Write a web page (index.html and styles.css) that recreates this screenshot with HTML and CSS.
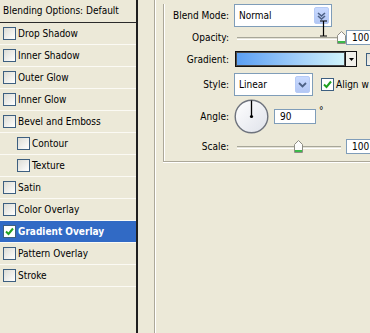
FILE: index.html
```html
<!DOCTYPE html>
<html lang="en">
<head>
    <meta charset="UTF-8">
    <title>Layer Style - Gradient Overlay</title>
    <link rel="stylesheet" href="styles.css">
</head>
<body>
    <div class="dialog">
        <div class="styles-list">
            <div class="list-head">Blending Options: Default</div>
            <div class="item"><span class="check"></span>Drop Shadow</div>
            <div class="item"><span class="check"></span>Inner Shadow</div>
            <div class="item"><span class="check"></span>Outer Glow</div>
            <div class="item"><span class="check"></span>Inner Glow</div>
            <div class="item"><span class="check"></span>Bevel and Emboss</div>
            <div class="item sub"><span class="check"></span>Contour</div>
            <div class="item sub"><span class="check"></span>Texture</div>
            <div class="item"><span class="check"></span>Satin</div>
            <div class="item"><span class="check"></span>Color Overlay</div>
            <div class="item selected">
                <span class="check on"><svg width="11" height="11" viewBox="0 0 11 11"><polyline points="2,5.5 4.5,8 9,2.5" fill="none" stroke="#21a121" stroke-width="2"/></svg></span>Gradient Overlay
            </div>
            <div class="item"><span class="check"></span>Pattern Overlay</div>
            <div class="item"><span class="check"></span>Stroke</div>
        </div>

        <div class="gutter"></div>

        <div class="settings">
            <div class="group">
                <div class="row row-mode">
                    <label class="label">Blend Mode:</label>
                    <div class="select select-mode">
                        <span>Normal</span>
                        <span class="drop"><svg width="9" height="8" viewBox="0 0 9 8"><polyline points="1,1 4.5,4 8,1" fill="none" stroke="#4d6185" stroke-width="1.6"/><polyline points="1,4 4.5,7 8,4" fill="none" stroke="#4d6185" stroke-width="1.6"/></svg></span>
                    </div>
                </div>

                <div class="row row-opacity">
                    <label class="label">Opacity:</label>
                    <div class="slider">
                        <div class="track"></div>
                        <svg class="thumb" style="left: 100%" width="9" height="13" viewBox="0 0 9 13"><path d="M0.5 4.5 L4.5 0.5 L8.5 4.5 V12.5 H0.5 Z" fill="#fcfcfb" stroke="#8e8d84"/><rect x="1" y="10" width="7" height="2" fill="#3cb94a"/></svg>
                    </div>
                    <div class="field">100</div>
                </div>

                <div class="row row-gradient">
                    <label class="label">Gradient:</label>
                    <div class="gradient-pick">
                        <div class="swatch"></div>
                        <div class="arrow"><svg width="5" height="3" viewBox="0 0 5 3"><polygon points="0,0 5,0 2.5,3" fill="#000"/></svg></div>
                    </div>
                    <span class="check reverse"></span>
                </div>

                <div class="row row-style">
                    <label class="label">Style:</label>
                    <div class="select select-style">
                        <span>Linear</span>
                        <span class="drop"><svg width="9" height="8" viewBox="0 0 9 8"><polyline points="1,2 4.5,5.5 8,2" fill="none" stroke="#4d6185" stroke-width="1.8"/></svg></span>
                    </div>
                    <span class="check on align"><svg width="11" height="11" viewBox="0 0 11 11"><polyline points="2,5.5 4.5,8 9,2.5" fill="none" stroke="#21a121" stroke-width="2"/></svg></span>
                    <span class="check-text">Align w</span>
                </div>

                <div class="row row-angle">
                    <label class="label">Angle:</label>
                    <svg class="dial" width="35" height="35" viewBox="0 0 35 35">
                        <defs>
                            <linearGradient id="dialFill" x1="0" y1="0" x2="1" y2="1">
                                <stop offset="0" stop-color="#ffffff"/>
                                <stop offset="1" stop-color="#dfe2ea"/>
                            </linearGradient>
                        </defs>
                        <circle cx="17.5" cy="17.5" r="16.3" fill="url(#dialFill)" stroke="#6e737d" stroke-width="1.4"/>
                        <line x1="17.5" y1="17.5" x2="17.5" y2="1.5" stroke="#000" stroke-width="1.3"/>
                        <circle cx="17.5" cy="17.5" r="1.6" fill="#000"/>
                    </svg>
                    <div class="field field-angle">90</div>
                    <span class="degree">°</span>
                </div>

                <div class="row row-scale">
                    <label class="label">Scale:</label>
                    <div class="slider slider-scale">
                        <div class="track"></div>
                        <svg class="thumb" style="left: 59%" width="9" height="13" viewBox="0 0 9 13"><path d="M0.5 4.5 L4.5 0.5 L8.5 4.5 V12.5 H0.5 Z" fill="#fcfcfb" stroke="#8e8d84"/><rect x="1" y="10" width="7" height="2" fill="#3cb94a"/></svg>
                    </div>
                    <div class="field">100</div>
                </div>
            </div>
        </div>
    </div>

    <!-- mouse pointer over the opacity slider -->
    <svg class="cursor" width="9" height="18" viewBox="0 0 9 18"><path d="M1 1 H8 M4.5 1 V16 M1 16 H8" fill="none" stroke="#000" stroke-width="1.2"/></svg>
</body>
</html>
```

FILE: styles.css
```css
body {
    margin: 0;
    width: 370px;
    height: 333px;
    overflow: hidden;
    position: relative;
    background-color: #ece9d8;
    font-family: "DejaVu Sans Condensed", "DejaVu Sans", sans-serif;
    font-size: 10px;
    color: #000;
}
.dialog {
    display: flex;
    height: 333px;
}
.styles-list {
    width: 136px;
    flex-shrink: 0;
    border-right: 2px solid #1f1f1f;
}
.list-head {
    height: 22px;
    line-height: 22px;
    padding-left: 3px;
    border-bottom: 1px solid #2a2a2a;
}
.item {
    display: flex;
    align-items: center;
    gap: 2px;
    height: 21px;
    padding-left: 3px;
    border-bottom: 1px solid #fbfaf4;
    white-space: nowrap;
}
.item.sub {
    padding-left: 17px;
}
.item.selected {
    background-color: #316ac5;
    color: #fff;
    font-weight: bold;
}
.check {
    display: inline-flex;
    align-items: center;
    justify-content: center;
    width: 13px;
    height: 13px;
    box-sizing: border-box;
    flex-shrink: 0;
    border: 1px solid #3d5f80;
    background: linear-gradient(135deg, #dcdcd5, #ffffff);
}
.check.on {
    background: #fff;
}
.gutter {
    width: 16px;
    flex-shrink: 0;
    border-right: 1px solid #aca899;
    box-shadow: 1px 0 0 #fff;
}
.settings {
    margin-left: 8px;
    flex-shrink: 0;
}
.group {
    width: 260px;
    padding-bottom: 7px;
    border-left: 1px solid #aca899;
    border-bottom: 1px solid #aca899;
    box-shadow: inset 1px 0 0 #fff, 0 1px 0 #fff;
}
.row {
    display: flex;
    align-items: center;
    white-space: nowrap;
}
.label {
    width: 65px;
    margin-right: 5px;
    text-align: right;
    flex-shrink: 0;
}
.row-mode {
    margin-top: 4px;
    height: 23px;
}
.row-opacity {
    margin-top: 3px;
    height: 15px;
}
.row-gradient {
    margin-top: 6px;
    height: 16px;
}
.row-style {
    margin-top: 6px;
    height: 23px;
}
.row-angle {
    margin-top: 3px;
    height: 35px;
}
.row-scale {
    margin-top: 5px;
    height: 15px;
}
.select {
    display: flex;
    align-items: center;
    justify-content: space-between;
    height: 23px;
    box-sizing: border-box;
    padding: 2px 2px 2px 4px;
    border: 1px solid #7f9db9;
    background-color: #fff;
    flex-shrink: 0;
}
.select-mode {
    width: 98px;
}
.select-style {
    width: 79px;
}
.drop {
    display: flex;
    align-items: center;
    justify-content: center;
    width: 15px;
    height: 100%;
    box-sizing: border-box;
    border: 1px solid #b6cbf6;
    border-radius: 2px;
    background: linear-gradient(#c9daff, #b3c7f4);
}
.slider {
    position: relative;
    width: 104px;
    height: 15px;
    margin-left: 3px;
    margin-right: 5px;
    flex-shrink: 0;
}
.track {
    position: absolute;
    left: 0;
    right: 0;
    top: 7px;
    height: 1px;
    border-top: 1px solid #a7a699;
    border-bottom: 1px solid #fff;
    background-color: #e4e2d6;
}
.thumb {
    position: absolute;
    top: 1px;
    margin-left: -4px;
}
.field {
    width: 34px;
    height: 15px;
    box-sizing: border-box;
    padding-left: 5px;
    line-height: 13px;
    border: 1px solid #7f9db9;
    background-color: #fff;
    flex-shrink: 0;
}
.field-angle {
    width: 42px;
}
.gradient-pick {
    display: flex;
    width: 122px;
    height: 16px;
    margin-left: 1px;
    box-sizing: border-box;
    border: 1px solid #111;
    flex-shrink: 0;
}
.swatch {
    flex: 1;
    background: linear-gradient(to right, #5a9ff3, #9fcdf9 55%, #d2f5fb);
    box-shadow: inset 0 0 0 1px #4a4a4a;
}
.arrow {
    width: 10px;
    display: flex;
    align-items: center;
    justify-content: center;
    border-left: 1px solid #111;
    background-color: #f1f0ea;
}
.reverse {
    margin-left: 9px;
}
.align {
    margin-left: 8px;
}
.check-text {
    margin-left: 2px;
}
.dial {
    flex-shrink: 0;
    margin-right: 5px;
}
.degree {
    align-self: flex-start;
    margin-top: 6px;
    margin-left: 3px;
}
.cursor {
    position: absolute;
    left: 319px;
    top: 20px;
}
```
